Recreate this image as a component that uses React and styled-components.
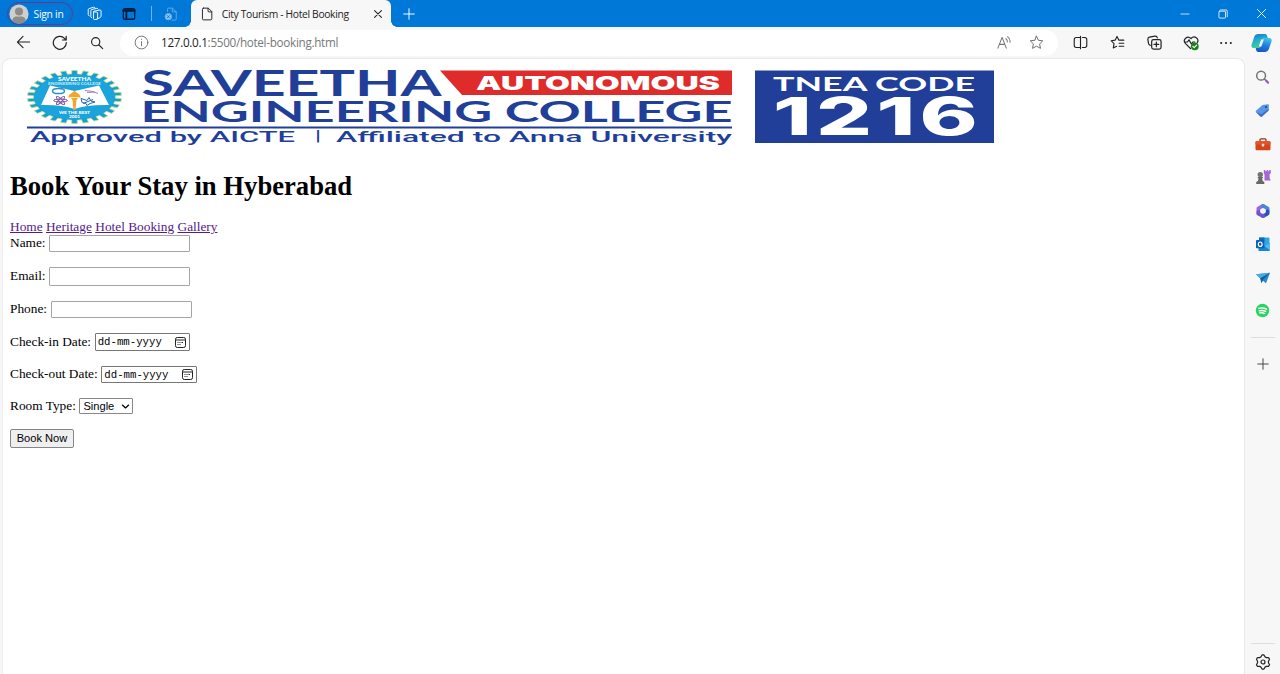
import React from "react";
import styled, { createGlobalStyle } from "styled-components";

const GlobalStyle = createGlobalStyle`
  * { box-sizing: border-box; }
  html, body { margin: 0; padding: 0; }
  body { background: #f7f7f7; overflow: hidden; }
`;

const uiFont = `"Open Sans", "Noto Sans", sans-serif`;

const Window = styled.div`
  width: 1280px;
  height: 674px;
  display: flex;
  flex-direction: column;
  background: #f7f7f7;
  font-family: ${uiFont};
`;

const TitleBar = styled.div`
  height: 27px;
  flex: none;
  display: flex;
  align-items: center;
  background: #0078d7;
  color: #fff;
`;

const Profile = styled.div`
  width: 66px;
  height: 23px;
  margin-left: 6.5px;
  border: 1px solid #653a86;
  border-radius: 12px;
  display: flex;
  align-items: center;
  padding-left: 1.5px;
  gap: 4.5px;
  font-size: 10.3px;
  letter-spacing: -0.25px;
  white-space: nowrap;
`;

const Slot = styled.div`
  width: ${(p) => p.$w}px;
  height: ${(p) => (p.$h ? `${p.$h}px` : "100%")};
  flex: none;
  display: flex;
  align-items: center;
  justify-content: center;
`;

const SettingsSlot = styled.div`
  height: 30px;
  flex: none;
  padding-top: 10px;
  line-height: 0;
`;

const Divider = styled.div`
  width: 1px;
  height: 15px;
  margin-left: 8.5px;
  background: #71b4ea;
`;

const Tab = styled.div`
  width: 200.5px;
  height: 27px;
  flex: none;
  display: flex;
  align-items: center;
  margin-left: 0.8px;
  padding: 0 8px 0 9px;
  color: #222;
  background: #f7f7f7;
  border-radius: 6px 6px 0 0;
  position: relative;
  &::before, &::after {
    content: "";
    position: absolute;
    bottom: 0;
    width: 6px;
    height: 6px;
  }
  &::before {
    left: -6px;
    background: radial-gradient(circle at 0 0, transparent 5.5px, #f7f7f7 6px);
  }
  &::after {
    right: -6px;
    background: radial-gradient(circle at 100% 0, transparent 5.5px, #f7f7f7 6px);
  }
`;

const TabTitle = styled.span`
  flex: 1;
  margin-left: 8px;
  font-size: 10.3px;
  letter-spacing: -0.33px;
  white-space: nowrap;
`;

const Spacer = styled.div`
  flex: 1;
`;

const Toolbar = styled.div`
  height: 31px;
  flex: none;
  display: flex;
  align-items: center;
  padding-left: 4.5px;
  color: #222;
`;

const AddressBar = styled.div`
  width: 937.5px;
  height: 26px;
  flex: none;
  margin: 0 4px 0 4.5px;
  display: flex;
  align-items: center;
  background: #fff;
  border-radius: 13px;
  padding: 0 4px 0 14px;
`;

const Url = styled.span`
  flex: 1;
  margin: -1px 0 0 12px;
  font-size: 11.7px;
  letter-spacing: -0.3px;
  color: #777;
  white-space: nowrap;
`;

const Host = styled.span`
  color: #222;
`;

const Body = styled.div`
  flex: 1;
  display: flex;
  min-height: 0;
`;

const Page = styled.main`
  width: 1242px;
  margin-left: 3px;
  padding: 11px 0 0 7px;
  background: #fff;
  border: 1px solid #e9e9e9;
  border-width: 1px 1px 0 0;
  border-radius: 8px 8px 0 0;
  box-shadow: -1px 0 1px #eee;
  font-family: "Liberation Serif", "Times New Roman", serif;
  font-size: 13.33px;
  color: #000;
`;

const Banner = styled.svg`
  display: block;
  width: 990px;
  height: 80px;
  overflow: visible;
`;

const Title = styled.h1`
  margin: 19px 0 0;
  height: 34px;
  font-size: 26.66px;
  line-height: 34px;
  font-weight: bold;
`;

const Nav = styled.nav`
  margin-top: 16px;
  height: 16px;
  display: flex;
  gap: 3.4px;
  line-height: 16px;
`;

const NavLink = styled.a`
  color: #551a8b;
  text-decoration: underline;
`;

const Form = styled.form`
  display: flex;
  flex-direction: column;
  gap: 15px;
  margin: 0;
`;

const Row = styled.div`
  height: ${(p) => p.$h}px;
  display: flex;
  align-items: center;
  gap: 3.6px;
`;

const Label = styled.label`
  margin-top: -2px;
  line-height: 15px;
`;

const TextBox = styled.input`
  width: 141px;
  height: 100%;
  padding: 1px 2px;
  border: 1px solid #a5a5a5;
  border-radius: 1px;
  background: #fff;
`;

const DateBox = styled.div`
  width: ${(p) => p.$w}px;
  height: 100%;
  display: flex;
  align-items: center;
  justify-content: space-between;
  padding: 0 3px 0 2px;
  border: 1px solid #777;
  border-radius: 1px;
  font-family: "Liberation Mono", monospace;
  font-size: 10.7px;
  white-space: nowrap;
`;

const SelectBox = styled.div`
  width: 54px;
  height: 100%;
  display: flex;
  align-items: center;
  justify-content: space-between;
  padding: 0 2px 0 3px;
  border: 1px solid #888;
  border-radius: 1px;
  font-family: "Liberation Sans", Arial, sans-serif;
  font-size: 11.1px;
`;

const SubmitButton = styled.button`
  width: 64px;
  height: 100%;
  padding: 0 0 1px;
  border: 1px solid #858585;
  border-radius: 2px;
  background: #efefef;
  color: #000;
  font-family: "Liberation Sans", Arial, sans-serif;
  font-size: 11.1px;
  white-space: nowrap;
`;

const Sidebar = styled.aside`
  width: 35px;
  padding-top: 2.5px;
  display: flex;
  flex-direction: column;
  align-items: center;
  color: #444;
`;

const SideRule = styled.div`
  width: 24px;
  height: 1px;
  margin-top: ${(p) => p.$top || 0}px;
  background: #dedede;
`;

const Icon = ({ s = 16, w = 1, children }) => (
  <svg width={s} height={s} viewBox="0 0 16 16" fill="none" stroke="currentColor" strokeWidth={w} strokeLinecap="round" strokeLinejoin="round">
    {children}
  </svg>
);

const Avatar = () => (
  <svg width="20" height="20" viewBox="0 0 20 20">
    <defs><clipPath id="av"><circle cx="10" cy="10" r="9.6" /></clipPath></defs>
    <circle cx="10" cy="10" r="9.6" fill="#d0cfcd" />
    <g fill="#8e8b88" clipPath="url(#av)">
      <circle cx="10" cy="7.4" r="4" />
      <path d="M3 18.5c0-4 2-6 4.500-6h5c2.500 0 4.500 2 4.500 6v2H3z" />
    </g>
  </svg>
);

const starPath = "M8 1.300l2 4.300 4.700.6-3.400 3.300.9 4.700L8 11.900l-4.200 2.300.9-4.700L1.300 6.200l4.700-.6z";

const Copilot = () => (
  <svg width="21" height="20" viewBox="0 0 20 20" preserveAspectRatio="none">
    <defs>
      <linearGradient id="cpa" x1="0" y1="0" x2="0.3" y2="1">
        <stop offset="0" stopColor="#1e6fc0" /><stop offset=".45" stopColor="#22a9d6" /><stop offset="1" stopColor="#45cf90" />
      </linearGradient>
      <linearGradient id="cpb" x1="0.600" y1="0" x2="0.3" y2="1">
        <stop offset="0" stopColor="#38c4e6" /><stop offset=".5" stopColor="#2678e0" /><stop offset="1" stopColor="#1455c4" />
      </linearGradient>
    </defs>
    <path d="M7 1h6.500c1 0 1.500.8 1.900 1.900L16 5h-2.500c-1.300 0-2 .7-2.400 2L9 13.500c-.4 1-1 1.500-2 1.500H2.500C.6 15 0 13.500.6 11.600l2.500-7.800C3.700 2 5 1 7 1z" fill="url(#cpa)" />
    <path d="M13 19H7c-1.200 0-1.800-.8-2.100-2L4.500 15H7c1.200 0 1.800-.7 2.200-1.900L11.300 7c.4-1.200 1-1.900 2.200-1.900h4c1.900 0 2.600 1.400 2 3.300L17 16c-.7 2-2 3-4 3z" fill="url(#cpb)" />
    <path d="M9.600 6.500h2.600l-2.300 7H7.400z" fill="#e7f6fb" />
  </svg>
);

const CalendarIcon = () => (
  <svg width="11" height="11" viewBox="0 0 11 11" fill="none" stroke="#222" strokeWidth="1">
    <rect x=".5" y=".5" width="10" height="10" rx="1.800" />
    <path d="M.5 3h10M4.500 5.500h1M6.500 5.500h1.500M2.500 5.500h1M2.500 7.500h1M4.500 7.500h1" />
  </svg>
);

const teeth = 26;
const gearPoints = (rx, ry, depth) => {
  const out = [];
  for (let i = 0; i < teeth; i++) {
    [[-0.28, 0], [-0.24, 1], [0.24, 1], [0.28, 0]].forEach(([o, up]) => {
      const a = ((i + o) / teeth) * Math.PI * 2 - Math.PI / 2;
      const k = up ? 1 : depth;
      out.push(`${(64.5 + Math.cos(a) * rx * k).toFixed(1)},${(27 + Math.sin(a) * ry * k).toFixed(1)}`);
    });
  }
  return out.join(" ");
};

const fit = (width) => ({ textLength: width, lengthAdjust: "spacingAndGlyphs" });

const CollegeBanner = () => (
  <Banner viewBox="0 0 990 80">
    <polygon points={gearPoints(47, 26.5, 0.87)} fill="#189cd8" stroke="#b7dc7d" strokeWidth=".8" />
    <ellipse cx="64.500" cy="27" rx="40" ry="22.500" fill="#1ba3dc" />
    <path d="M40 15.500L64.500 21l24.500-5.500L99 35q-22-.5-34.500 4Q52 34.500 31 35z" fill="#fff" />
    <g fontFamily="Lato, sans-serif" fill="#fff" fontWeight="900">
      <text x="48" y="10.500" fontSize="5" {...fit(33)}>SAVEETHA</text>
      <text x="38" y="14.500" fontSize="3.300" fillOpacity=".75" {...fit(53)}>ENGINEERING COLLEGE</text>
      <text x="49" y="43.500" fontSize="3.300" {...fit(31)}>WE THE BEST</text>
      <text x="59" y="48" fontSize="3.300" {...fit(11)}>2001</text>
    </g>
    <g fill="none" strokeWidth="1">
      <ellipse cx="48.500" cy="21" rx="6" ry="2.600" stroke="#2791c9" strokeWidth="1.500" />
      <g stroke="#77529d">
        <ellipse cx="50.500" cy="30.500" rx="7" ry="1.500" />
        <ellipse cx="50.500" cy="30.500" rx="5.500" ry="1.500" transform="rotate(45 50.500 30.500)" />
        <ellipse cx="50.500" cy="30.500" rx="5.500" ry="1.500" transform="rotate(-45 50.500 30.500)" />
        <path d="M75 20.500l8 1 5 2M77 22.500l8-.5" stroke="#a283b7" />
      </g>
      <path d="M71 28.500l6 2 2-3 2 3.500 4 1-5 1.500-3 2-1-2-4-1zM73 33.500l10-4" stroke="#246ba9" />
    </g>
    <path d="M64.500 20.500c2 3 6 3 6 7h-2l-2 2.500-1 10h-2l-1-10-2-2.500h-2c0-4 4-4 6-7z" fill="#f4a52d" />
    <path d="M60 27.500h9" stroke="#fff0ad" />
    <g fill="#213f99" fontFamily="Lato, sans-serif" fontWeight="700">
      <text x="131.500" y="26.300" fontSize="35.500" {...fit(300)}>SAVEETHA</text>
      <text x="130.500" y="51.500" fontSize="28.500" {...fit(592)}>ENGINEERING COLLEGE</text>
    </g>
    <path d="M430 0.500H722V25H452z" fill="#e02b2b" />
    <text x="466" y="19.500" fontFamily="Inter, sans-serif" fontWeight="900" fontSize="18.500" fill="#fff" {...fit(244)}>AUTONOMOUS</text>
    <path d="M17 57.500H722" stroke="#213f99" strokeWidth="2" />
    <g fill="#213f99" fontFamily="Roboto, sans-serif" fontSize="15.500" fontWeight="500">
      <text x="20" y="71.500" {...fit(265)}>Approved by AICTE</text>
      <text x="305" y="71" {...fit(6)}>|</text>
      <text x="326" y="71.500" {...fit(396)}>Affiliated to Anna University</text>
    </g>
    <rect x="745" y="0.500" width="239" height="72.500" fill="#213f99" />
    <g fill="#fff" fontFamily="Lato, sans-serif">
      <text x="763" y="20.800" fontWeight="700" fontSize="18.500" {...fit(202)}>TNEA CODE</text>
      <text x="763" y="65" fontFamily="Inter, sans-serif" fontWeight="800" fontSize="52" letterSpacing="2.500" {...fit(209)}>1216</text>
    </g>
  </Banner>
);

const SearchColor = () => (
  <Icon s={15} w={1.6}><circle cx="6.500" cy="6" r="4.700" stroke="#747474" /><path d="M10 9.500l1.500 1.500" stroke="#747474" /><path d="M11.700 11.300l2.300 2.300" stroke="#8f55c9" strokeWidth="2.200" /></Icon>
);
const Tag = () => (
  <Icon s={15} w={0}><path d="M1 8.200L8 2l6-.7c.6 0 .9.3.9.9L14.500 8 7.500 14.300c-.6.500-1.200.5-1.700 0L1 9.500c-.4-.4-.4-.9 0-1.300z" fill="#5b95e5" /><path d="M1 9.500l4.800 4.800c.5.5 1.100.5 1.700 0L14.500 8v-2L6.800 12z" fill="#3d70c8" /><circle cx="11.700" cy="4.300" r="1.100" fill="#173f87" /></Icon>
);
const Toolbox = () => (
  <Icon s={16} w={0}><path d="M5 5.300V3.800c0-.7.400-1 1-1h4c.6 0 1 .3 1 1v1.500" stroke="#8b3420" strokeWidth="1.300" /><rect x=".5" y="5.200" width="15" height="9" rx="1.200" fill="#d3441a" /><path d="M.5 8.500v-2c0-.8.500-1.300 1.200-1.300h12.600c.7 0 1.200.5 1.200 1.300v2z" fill="#e65425" /><rect x="6.800" y="7.800" width="2.400" height="2.700" rx=".5" fill="#f5ded3" /></Icon>
);
const Chess = () => (
  <Icon s={16} w={0}><path d="M8.800 1h1.500v1.300h1.400V1h1.500v1.300h1.100V1h1.500v3.200l-1.200 1V9l1.200 2.500H9.500V5.200l-.7-1z" fill="#a467d6" /><circle cx="5.300" cy="5.600" r="2.700" fill="#737373" /><path d="M2.700 8h5.200v1.300H7l.7 2.700 1.600 1v2H1.200v-2l1.700-1 .7-2.700h-.9z" fill="#686868" /></Icon>
);
const M365 = () => (
  <Icon s={16} w={4}>
    <path d="M3.500 10.500V5.500L8 3" stroke="#a064df" />
    <path d="M8 3l4.500 2.500v3" stroke="#4b86d8" />
    <path d="M12.500 8.500v2L8 13" stroke="#324fb5" />
    <path d="M3.500 9v1.500L8 13" stroke="#6c55cf" />
    <circle cx="8" cy="8" r="2.800" fill="#f4f4fa" stroke="none" />
  </Icon>
);
const Outlook = () => (
  <Icon s={16} w={0}><rect x="4" y="1.500" width="10.500" height="9" rx="1" fill="#32a7e8" /><path d="M4 1.500h5.500v4H4z" fill="#126bb8" /><path d="M3.500 7l6 3 5.500-3v7c0 .6-.3.900-.9.900H3.500z" fill="#1687d3" /><path d="M9.500 10l5.500 4.500V7z" fill="#54bdec" /><rect x="1" y="4" width="8.300" height="8.300" rx=".8" fill="#0c60b5" /><ellipse cx="5.200" cy="8.200" rx="1.900" ry="2.200" stroke="#fff" strokeWidth="1.200" /></Icon>
);
const Plane = () => (
  <Icon s={16} w={0}><path d="M1 4.200l14-1.500L11 13.300 8 10.700 6.500 13 5 8.200z" fill="#218bd0" /><path d="M1 4.200l14-1.500L5.500 8.200z" fill="#45abe3" /><path d="M5.500 8.200L15 2.700 7.500 10.200l-1 3z" fill="#155c9c" /></Icon>
);
const Spotify = () => (
  <Icon s={15} w={1.4}><circle cx="8" cy="8" r="7.200" fill="#2bd363" stroke="none" /><path d="M4 5.800c3-.8 6-.5 8.300.8M4.500 8.300c2.600-.6 5-.3 7 .7M5 10.600c2-.4 3.800-.2 5.500.6" stroke="#fff" /></Icon>
);

const gearOutline = Array.from({ length: 24 }, (_, i) => {
  const a = ((i - 0.5) / 24) * Math.PI * 2 - Math.PI / 2;
  const r = i % 4 < 2 ? 7.1 : 5.5;
  return `${(8 + Math.cos(a) * r).toFixed(2)},${(8 + Math.sin(a) * r).toFixed(2)}`;
}).join(" ");

const sideItems = [SearchColor, Tag, Toolbox, Chess, M365, Outlook, Plane, Spotify];

export default function App() {
  return (
    <Window>
      <GlobalStyle />
      <TitleBar>
        <Profile><Avatar />Sign in</Profile>
        <Slot $w={43}>
          <Icon s={15} w={1}><path d="M7 6.500q0-.8.700-1l6-1.200q1.300-.1 1.300 1v5.500q0 .8-.7 1.200l-4 2.300M7 6.500v7q0 1 1 1l2.500-.5q.8-.2.8-1V7.500q0-1-1-1z" /><path d="M5 12.500q-.9-.2-.9-1V5q0-1 .8-1.200l5.500-1.300q1.200-.2 1.500.8M2.300 10.500q-1-.2-1-1.200V4q0-1 .8-1.200L7 1.300Q8.200 1 8.700 2" /></Icon>
        </Slot>
        <Slot $w={27}>
          <Icon s={14} w={1.5}><g stroke="#001c3b"><rect x="1.500" y="2" width="13" height="12" rx="1.500" /><path d="M1.500 3.500h13M1.500 4.500h13M5 5v9" strokeWidth="2" /></g></Icon>
        </Slot>
        <Divider />
        <Slot $w={38}>
          <Icon s={14} w={1}><g stroke="#65aee9"><path d="M4 5V2.500c0-.8.300-1.200 1-1.200h4.500L14 5.500V14c0 .6-.3 1-1 1H9M9.500 1.500v4H14" /><circle cx="5" cy="11" r="3.700" fill="#8fc5ef" /><path d="M3.800 9.800l2.400 2.400m0-2.400l-2.400 2.400" stroke="#0870c5" /></g></Icon>
        </Slot>
        <Tab>
          <Icon s={14} w={1.1}><path d="M4 1.300h5.500L13.500 5.300v8.200q0 1.200-1.200 1.200H4q-1.200 0-1.200-1.200v-11q0-1.200 1.200-1.200zM9.200 1.500v3.100q0 1 1 1h3" /></Icon>
          <TabTitle>City Tourism - Hotel Booking</TabTitle>
          <Icon s={10} w={1.7}><path d="M2.500 2.500l11 11M13.500 2.500l-11 11" /></Icon>
        </Tab>
        <Slot $w={35}><Icon s={12} w={1.3}><path d="M8 1v14M1 8h14" /></Icon></Slot>
        <Spacer />
        <Slot $w={38}><Icon s={10} w={1.2}><path d="M1.500 8h13" /></Icon></Slot>
        <Slot $w={38}><Icon s={10} w={1.3}><rect x="1.500" y="3.500" width="10.500" height="11" rx="1" /><path d="M4 1.500h9q1.800 0 1.800 2v9" /></Icon></Slot>
        <Slot $w={38}><Icon s={11} w={1.3}><path d="M2 2l12 12M14 2L2 14" /></Icon></Slot>
      </TitleBar>

      <Toolbar>
        <Slot $w={37}><Icon s={15} w={1.2}><path d="M14.500 7.500H1.500M7.500 1.500l-6 6 6 6" /></Icon></Slot>
        <Slot $w={37}><Icon s={16} w={1.2}><path d="M14.300 7.500A6.500 6.500 0 1 1 12.500 3.300L14 5M14.200 1.300V5H10.500" /></Icon></Slot>
        <Slot $w={37}><Icon s={14} w={1.3}><circle cx="6.500" cy="6.500" r="4.700" /><path d="M10 10l4.500 4.500" /></Icon></Slot>
        <AddressBar>
          <Icon s={15} w={1}><g stroke="#707070"><circle cx="8" cy="8" r="6.800" /><path d="M8 7v4.500M8 4.400v.3" /></g></Icon>
          <Url><Host>127.0.0.1</Host>:5500/hotel-booking.html</Url>
          <Slot $w={33.5}><Icon s={15} w={1.1}><g stroke="#777"><path d="M2 14L6.500 2.500 11 14M3.700 10h5.600M10.500 4q1.800 1.300 1.600 3.500M12.300 1.800q3.200 2.200 2.700 6" /></g></Icon></Slot>
          <Slot $w={33.5}><Icon s={15} w={1}><path d={starPath} stroke="#666" /></Icon></Slot>
        </AddressBar>
        <Slot $w={37}><Icon s={15} w={1.2}><path d="M6 2.700H3.500Q1.300 2.700 1.300 5v6q0 2.300 2.200 2.300H6M10 2.700h2.500q2.200 0 2.200 2.300v6q0 2.300-2.200 2.300H10M6 2.700h2M6 13.300h2M8 1.300v13.400" /></Icon></Slot>
        <Slot $w={37}><Icon s={15} w={1.2}><path d="M14.700 5.500H9.500L7.500 1.500l-2 4-4.300.6 3.100 3-.8 4.700L7 12M9.700 8.800h5M9.700 12h5" /></Icon></Slot>
        <Slot $w={37}><Icon s={15} w={1.3}><rect x="5" y="5" width="10" height="10" rx="2" /><path d="M10 7.500v5M7.500 10h5M3.500 11Q2 10.500 1.600 9L.9 4.500Q.8 2.700 2.500 2.300L8.500 1.300Q10.500 1 11 3" /></Icon></Slot>
        <Slot $w={36}>
          <Icon s={16} w={1.2}><path d="M7.500 13.500L2.300 8.300C-.7 4.800 4.300-.2 8 3.500c3.500-3.700 8.500.3 6.300 4M1.500 7h3L6 4.800 8.300 9l1.500-2h2" /><circle cx="11.800" cy="11.300" r="3.900" fill="#16801b" stroke="none" /><path d="M9.900 11.400l1.300 1.300 2.400-2.600" stroke="#fff" /></Icon>
        </Slot>
        <Slot $w={35}><Icon s={14} w={0}><g fill="#222"><circle cx="2.500" cy="8" r="1.200" /><circle cx="8" cy="8" r="1.200" /><circle cx="13.500" cy="8" r="1.200" /></g></Icon></Slot>
        <Slot $w={36}><Copilot /></Slot>
      </Toolbar>

      <Body>
        <Page>
          <CollegeBanner />
          <Title>Book Your Stay in Hyberabad</Title>
          <Nav>
            <NavLink>Home</NavLink>
            <NavLink>Heritage</NavLink>
            <NavLink>Hotel Booking</NavLink>
            <NavLink>Gallery</NavLink>
          </Nav>
          <Form>
            <Row $h={17}><Label>Name:</Label><TextBox /></Row>
            <Row $h={19}><Label>Email:</Label><TextBox /></Row>
            <Row $h={17}><Label>Phone:</Label><TextBox /></Row>
            <Row $h={18}><Label>Check-in Date:</Label><DateBox $w={95}>dd-mm-yyyy<CalendarIcon /></DateBox></Row>
            <Row $h={17}><Label>Check-out Date:</Label><DateBox $w={96}>dd-mm-yyyy<CalendarIcon /></DateBox></Row>
            <Row $h={16}>
              <Label>Room Type:</Label>
              <SelectBox>Single<Icon s={9} w={2.3}><path d="M2.500 5.500l5.500 5 5.500-5" /></Icon></SelectBox>
            </Row>
            <Row $h={19}><SubmitButton type="button">Book Now</SubmitButton></Row>
          </Form>
        </Page>
        <Sidebar>
          {sideItems.map((Item, i) => (
            <Slot key={i} $w={35} $h={33.4}><Item /></Slot>
          ))}
          <SideRule $top={9.5} />
          <Slot $w={35} $h={52}><Icon s={12} w={1.3}><path d="M8 1v14M1 8h14" /></Icon></Slot>
          <Spacer />
          <SideRule />
          <SettingsSlot>
            <Icon s={16} w={1.2}><g stroke="#222"><polygon points={gearOutline} /><circle cx="8" cy="8" r="2" /></g></Icon>
          </SettingsSlot>
        </Sidebar>
      </Body>
    </Window>
  );
}
